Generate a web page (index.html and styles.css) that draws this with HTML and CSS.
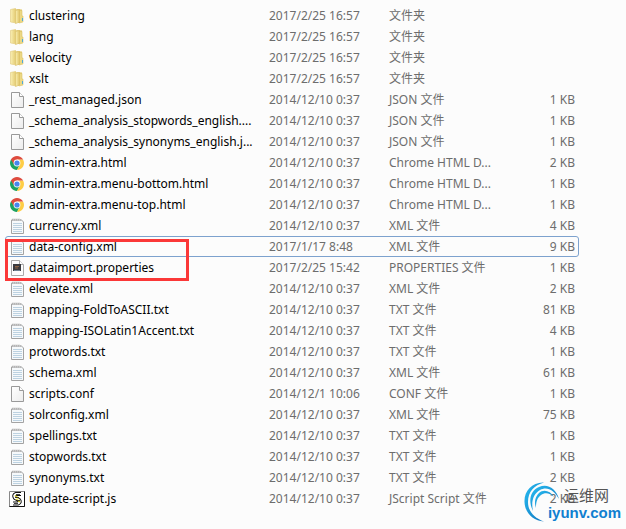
FILE: index.html
```html
<!doctype html>
<html lang="zh-CN">
<head>
  <meta charset="utf-8">
  <title>conf</title>
  <meta name="viewport" content="width=device-width, initial-scale=1">
  <link rel="stylesheet" href="styles.css">
</head>

<body>
  <svg class="sprite" aria-hidden="true">
    <defs>
      <linearGradient id="folderFront" x1="0" y1="0" x2="1" y2="0">
        <stop offset="0" stop-color="#faf0b4"/>
        <stop offset="1" stop-color="#e0c568"/>
      </linearGradient>
      <linearGradient id="paper" x1="0" y1="0" x2="1" y2="1">
        <stop offset="0" stop-color="#ffffff"/>
        <stop offset="1" stop-color="#ececec"/>
      </linearGradient>
      <linearGradient id="swoosh" x1="0" y1="0" x2="1" y2="1">
        <stop offset="0" stop-color="#27bdf2"/>
        <stop offset="1" stop-color="#1173bd"/>
      </linearGradient>
    </defs>
    <symbol id="folder" viewBox="0 0 16 16">
      <path d="M8 1l5 .5V14l-4 1z" fill="#e3cb72"/>
      <path d="M9.500 2.500H13V8h1v6l-4 1z" fill="#ecd884" stroke="#dcc26a" stroke-width=".6"/>
      <path d="M1.500 1.500l5-1 1 1V15l-6-1z" fill="url(#folderFront)" stroke="#e0c878" stroke-width=".6"/>
      <path d="M6.500 2.500l4-1V14l-4 1.500z" fill="url(#folderFront)" stroke="#d8bd64" stroke-width=".6"/>
      <path d="M13.500 10v3" stroke="#4fa9d8"/>
    </symbol>
    <symbol id="file" viewBox="0 0 16 16">
      <path d="M2.500.5h8l4 4v11h-12z" fill="url(#paper)" stroke="#999"/>
      <path d="M10.500.5v4h4" fill="#fff" stroke="#999"/>
    </symbol>
    <symbol id="text" viewBox="0 0 16 16">
      <path d="M2.500 2v13.500h12V4l-2-2z" fill="#f6f9fb" stroke="#a3a3a3"/>
      <path d="M4 5.500h9M4 7.500h9M4 9.500h9M4 11.500h9M4 13.500h9" stroke="#bdd2e1"/>
      <path d="M3 3l1-2.500M5 3l1-2.500M7 3l1-2.500M9 3l1-2.500M11 3l1-2" stroke="#aaa" stroke-width=".8"/>
    </symbol>
    <symbol id="properties" viewBox="0 0 16 16">
      <path d="M2.500.5h8l4 4v11h-12z" fill="#fcfcfc" stroke="#aaa"/>
      <path d="M10.500.5v4h4" fill="#fff" stroke="#aaa"/>
      <rect x="4" y="4" width="8" height="7" fill="#3b3b3f"/>
      <path d="M6 6.500h4M6 8h3" stroke="#8b6244"/>
      <path d="M5 10.500h6" stroke="#718292"/>
    </symbol>
    <symbol id="chrome" viewBox="0 0 16 16">
      <path d="M1.940 4.500A7 7 0 0 0 8 15l3-5.500-3-1.500z" fill="#1ca261"/>
      <path d="M14.060 4.500A7 7 0 0 1 8 15l3-5.500L8 4.500z" fill="#fecd45"/>
      <path d="M1.940 4.500A7 7 0 0 1 14.060 4.500H8L5 9.500z" fill="#de4b3e"/>
      <circle cx="8" cy="8" r="3.400" fill="#fff"/>
      <circle cx="8" cy="8" r="2.600" fill="#4786ee"/>
    </symbol>
    <symbol id="script" viewBox="0 0 16 16">
      <path d="M.5.5h15v15H.5z" fill="#fff" stroke="#888"/>
      <path d="M.5 15.500h15V.5" fill="none" stroke="#111"/>
      <path d="M12 3H7Q4 4 6 7l4 2q2 2-1 3.500H4" fill="none" stroke="#111" stroke-width="4"/>
      <path d="M12 3H7Q4 4 6 7l4 2q2 2-1 3.500H4" fill="none" stroke="#fff" stroke-width="2"/>
      <path d="M6 4.500l4 3M7 8l4 3" stroke="#ddd128" stroke-width="1.500"/>
      <path d="M7 3.500h4M6 6.500h4M7 9.500h4M5 12.500h4" stroke="#111" stroke-width=".8"/>
    </symbol>
  </svg>

  <main class="explorer">
    <table class="files">
      <colgroup>
        <col class="col-name">
        <col class="col-date">
        <col class="col-type">
        <col class="col-size">
      </colgroup>
      <tbody>
        <tr><td><svg class="icon"><use href="#folder"/></svg>clustering</td><td>2017/2/25 16:57</td><td>文件夹</td><td></td></tr>
        <tr><td><svg class="icon"><use href="#folder"/></svg>lang</td><td>2017/2/25 16:57</td><td>文件夹</td><td></td></tr>
        <tr><td><svg class="icon"><use href="#folder"/></svg>velocity</td><td>2017/2/25 16:57</td><td>文件夹</td><td></td></tr>
        <tr><td><svg class="icon"><use href="#folder"/></svg>xslt</td><td>2017/2/25 16:57</td><td>文件夹</td><td></td></tr>
        <tr><td><svg class="icon"><use href="#file"/></svg>_rest_managed.json</td><td>2014/12/10 0:37</td><td>JSON 文件</td><td>1 KB</td></tr>
        <tr><td><svg class="icon"><use href="#file"/></svg>_schema_analysis_stopwords_english....</td><td>2014/12/10 0:37</td><td>JSON 文件</td><td>1 KB</td></tr>
        <tr><td><svg class="icon"><use href="#file"/></svg>_schema_analysis_synonyms_english.j...</td><td>2014/12/10 0:37</td><td>JSON 文件</td><td>1 KB</td></tr>
        <tr><td><svg class="icon"><use href="#chrome"/></svg>admin-extra.html</td><td>2014/12/10 0:37</td><td>Chrome HTML D...</td><td>2 KB</td></tr>
        <tr><td><svg class="icon"><use href="#chrome"/></svg>admin-extra.menu-bottom.html</td><td>2014/12/10 0:37</td><td>Chrome HTML D...</td><td>1 KB</td></tr>
        <tr><td><svg class="icon"><use href="#chrome"/></svg>admin-extra.menu-top.html</td><td>2014/12/10 0:37</td><td>Chrome HTML D...</td><td>1 KB</td></tr>
        <tr><td><svg class="icon"><use href="#text"/></svg>currency.xml</td><td>2014/12/10 0:37</td><td>XML 文件</td><td>4 KB</td></tr>
        <tr class="focused"><td><svg class="icon"><use href="#text"/></svg>data-config.xml<span class="marker"></span></td><td>2017/1/17 8:48</td><td>XML 文件</td><td>9 KB</td></tr>
        <tr><td><svg class="icon"><use href="#properties"/></svg>dataimport.properties</td><td>2017/2/25 15:42</td><td>PROPERTIES 文件</td><td>1 KB</td></tr>
        <tr><td><svg class="icon"><use href="#text"/></svg>elevate.xml</td><td>2014/12/10 0:37</td><td>XML 文件</td><td>2 KB</td></tr>
        <tr><td><svg class="icon"><use href="#text"/></svg>mapping-FoldToASCII.txt</td><td>2014/12/10 0:37</td><td>TXT 文件</td><td>81 KB</td></tr>
        <tr><td><svg class="icon"><use href="#text"/></svg>mapping-ISOLatin1Accent.txt</td><td>2014/12/10 0:37</td><td>TXT 文件</td><td>4 KB</td></tr>
        <tr><td><svg class="icon"><use href="#text"/></svg>protwords.txt</td><td>2014/12/10 0:37</td><td>TXT 文件</td><td>1 KB</td></tr>
        <tr><td><svg class="icon"><use href="#text"/></svg>schema.xml</td><td>2014/12/10 0:37</td><td>XML 文件</td><td>61 KB</td></tr>
        <tr><td><svg class="icon"><use href="#file"/></svg>scripts.conf</td><td>2014/12/1 10:06</td><td>CONF 文件</td><td>1 KB</td></tr>
        <tr><td><svg class="icon"><use href="#text"/></svg>solrconfig.xml</td><td>2014/12/10 0:37</td><td>XML 文件</td><td>75 KB</td></tr>
        <tr><td><svg class="icon"><use href="#text"/></svg>spellings.txt</td><td>2014/12/10 0:37</td><td>TXT 文件</td><td>1 KB</td></tr>
        <tr><td><svg class="icon"><use href="#text"/></svg>stopwords.txt</td><td>2014/12/10 0:37</td><td>TXT 文件</td><td>1 KB</td></tr>
        <tr><td><svg class="icon"><use href="#text"/></svg>synonyms.txt</td><td>2014/12/10 0:37</td><td>TXT 文件</td><td>2 KB</td></tr>
        <tr><td><svg class="icon"><use href="#script"/></svg>update-script.js</td><td>2014/12/10 0:37</td><td>JScript Script 文件</td><td>2 KB</td></tr>
      </tbody>
    </table>

    <div class="watermark">
      <svg class="watermark-logo" viewBox="0 0 36 40" aria-hidden="true">
        <path d="M20 .5C8 0 0 9 .5 20 1 31 9 39 20 39.500 10 36 4 29 4 20 4 10 10 3 20 .5z" fill="url(#swoosh)"/>
        <path d="M35 17C32 6 23 1 15 5 6 9 4 19 9 29 7 20 9 12 16 8c7-4 14 0 19 9z" fill="url(#swoosh)"/>
        <path d="M30 15C26 8 19 7 15 11c-4 4-5 9-3 15 0-6 1-10 5-13 4-3 9-2 13 2z" fill="url(#swoosh)"/>
      </svg>
      <div class="watermark-text">
        <span class="watermark-name">运维网</span>
        <span class="watermark-site">iyunv.com</span>
      </div>
    </div>
  </main>
</body>
</html>
```
FILE: styles.css
```css
html,
body {
  margin: 0;
  padding: 0;
  background: #fcfcfc;
  font-family: "Noto Sans", "Noto Sans CJK SC", sans-serif;
  font-size: 12px;
}

.sprite {
  position: absolute;
  width: 0;
  height: 0;
}

.explorer {
  position: relative;
  padding: 5px 47px 19px 5px;
}

.files {
  width: 100%;
  table-layout: fixed;
  border-collapse: separate;
  border-spacing: 0;
  color: #6d6d6d;
}

.col-date {
  width: 120px;
}

.col-type {
  width: 120px;
}

.col-size {
  width: 74px;
}

.files td {
  height: 21px;
  padding: 0 4px;
  line-height: 20px;
  white-space: nowrap;
}

.files td:first-child {
  position: relative;
  color: #000;
}

.files td:last-child {
  text-align: right;
}

.icon {
  width: 16px;
  height: 16px;
  margin-right: 4px;
  vertical-align: middle;
}

.focused {
  border-radius: 3px;
  outline: 1px solid #7da2ce;
  outline-offset: -1px;
}

.marker {
  position: absolute;
  top: 3px;
  left: 0;
  z-index: 1;
  box-sizing: border-box;
  width: 184px;
  height: 42px;
  border: 3px solid #fb3838;
}

.watermark {
  position: absolute;
  right: 5px;
  bottom: 6px;
  display: flex;
  align-items: flex-end;
}

.watermark-logo {
  width: 36px;
  height: 40px;
  margin-right: -12px;
}

.watermark-text {
  display: flex;
  flex-direction: column;
}

.watermark-name {
  padding-left: 16px;
  color: #555;
  font-size: 15px;
  line-height: 18px;
}

.watermark-site {
  color: #1080d0;
  font-family: "Liberation Sans", Arial, sans-serif;
  font-size: 15px;
  font-weight: bold;
  line-height: 18px;
}
```
